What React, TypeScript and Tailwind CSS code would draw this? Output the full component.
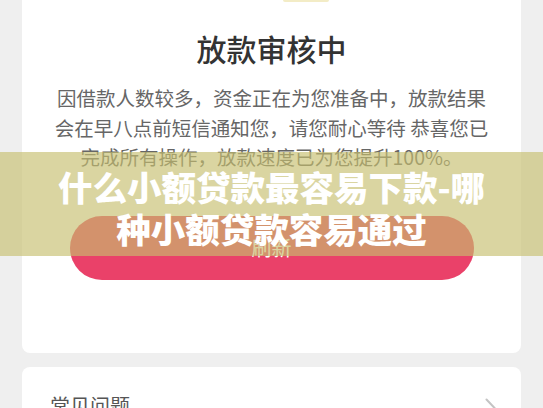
import React from "react";

export default function App() {
  return (
    <div className="relative w-[543px] h-[408px] overflow-hidden bg-[#efefef] font-['Noto_Sans_CJK_SC','Noto_Sans',sans-serif]">
      <div className="px-[22px] flex flex-col">
        {/* main card */}
        <div className="bg-white rounded-b-lg flex flex-col items-center pb-[73px]">
          <div className="self-start ml-[261px] w-[46px] h-[2px] rounded-b bg-[#f3ecc6]" />
          <div className="mt-[26px] text-[30px] leading-[40px] text-[#333333] font-medium">放款审核中</div>
          <div className="mt-[15px] text-[19.5px] leading-[29.5px] text-[#666666] text-center">
            <div>因借款人数较多，资金正在为您准备中，放款结果</div>
            <div>会在早八点前短信通知您，请您耐心等待 恭喜您已</div>
            <div>完成所有操作，放款速度已为您提升100%。</div>
          </div>
          <button className="mt-[44px] w-[404px] h-[64px] rounded-full bg-[#ea4169] text-white text-[20px] flex items-center justify-center">
            刷新
          </button>
        </div>

        {/* FAQ card */}
        <div className="mt-[14px] bg-white rounded-t-lg pt-[24px] pl-[28px] pr-[24px] flex items-start justify-between">
          <div className="text-[20px] leading-[30px] text-[#555555]">常见问题</div>
          <svg width="12" height="22" viewBox="0 0 12 22" className="mt-[7px]">
            <polyline points="1.5,1.5 10,10.5 1.5,19.5" fill="none" stroke="#c4c4c4" strokeWidth="2" strokeLinecap="round" strokeLinejoin="round" />
          </svg>
        </div>
      </div>

      {/* overlay banner */}
      <div className="absolute left-0 right-0 top-[152px] h-[104px] bg-[rgba(198,190,110,0.65)] pt-[14px] flex flex-col items-center text-white font-black text-[34.5px] leading-[41.5px]">
        <div>什么小额贷款最容易下款-哪</div>
        <div>种小额贷款容易通过</div>
      </div>
    </div>
  );
}
